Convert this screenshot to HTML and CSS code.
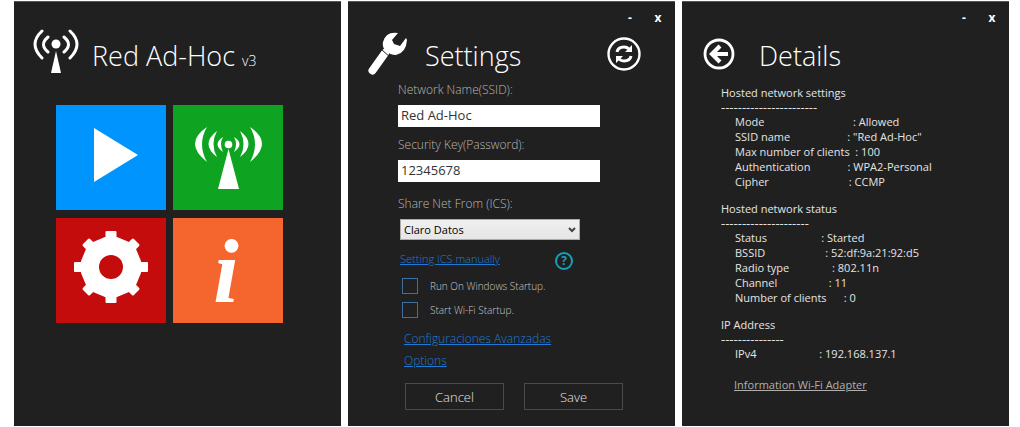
FILE: index.html
```html
<!DOCTYPE html>
<html lang="en">
<head>
  <meta charset="UTF-8">
  <meta name="viewport" content="width=device-width, initial-scale=1.0">
  <title>Red Ad-Hoc v3</title>
  <link rel="stylesheet" href="styles.css">
</head>
<body>
  <main class="windows">

    <!-- Main menu -->
    <section class="window">
      <div class="titlebar"></div>
      <header class="header header-main">
        <svg class="logo" width="46" height="50" viewBox="0 0 46 50" fill="none" stroke="#fff" stroke-width="3" stroke-linecap="round">
          <path d="M9 2Q-5 15 9 29M15 8Q6 15.500 15 23M31 8Q40 15.500 31 23M37 2Q51 15 37 29"/>
          <circle cx="23" cy="15" r="4.500" fill="#fff" stroke="none"/>
          <path d="M23 22L28 44H18Z" fill="#fff" stroke="none"/>
        </svg>
        <h1>Red Ad-Hoc <small>v3</small></h1>
      </header>
      <nav class="tiles">
        <button class="tile tile-blue" aria-label="Start">
          <svg width="110" height="105" viewBox="0 0 110 105" fill="#fff"><path d="M38 23L82 50L38 77Z"/></svg>
        </button>
        <button class="tile tile-green" aria-label="Network">
          <svg width="110" height="105" viewBox="0 0 110 105" fill="#fff">
            <path d="M34 22Q10 38 34 57Q24 39 34 22ZM44 26Q27 39 44 52Q37 39 44 26ZM50 32Q39 39 50 47Q46 39 50 32Z"/>
            <path d="M77 22Q101 38 77 57Q87 39 77 22ZM67 26Q84 39 67 52Q74 39 67 26ZM61 32Q72 39 61 47Q65 39 61 32Z"/>
            <circle cx="55.500" cy="39.500" r="3.800"/>
            <path d="M55.500 44L66 84H45Z"/>
          </svg>
        </button>
        <button class="tile tile-red" aria-label="Settings">
          <svg width="110" height="105" viewBox="0 0 110 105" fill="#fff">
            <g transform="translate(55 49)">
              <rect x="-5.500" y="-36" width="11" height="72" rx="1"/>
              <rect x="-37" y="-5" width="74" height="10" rx="1"/>
              <g transform="rotate(45)">
                <rect x="-5" y="-36" width="10" height="72" rx="1.500"/>
                <rect x="-36" y="-5" width="72" height="10" rx="1.500"/>
              </g>
              <path d="M-6 -30Q0 -31 6 -30L18 -25L25 -18L30 -6V6L25 18L18 25L6 30Q0 31 -6 30L-18 25L-25 18L-30 6V-6L-25 -18L-18 -25Z"/>
              <circle r="12" fill="#c40c0c"/>
            </g>
          </svg>
        </button>
        <button class="tile tile-orange" aria-label="Information"><span class="info">i</span></button>
      </nav>
    </section>

    <!-- Settings -->
    <section class="window">
      <div class="titlebar">
        <button aria-label="Minimize">-</button>
        <button aria-label="Close">x</button>
      </div>
      <header class="header header-settings">
        <svg width="40" height="44" viewBox="0 0 40 44">
          <path d="M17 21L4.500 38.500" stroke="#fff" stroke-width="8" stroke-linecap="round"/>
          <path d="M30 1Q18 -1 15 10Q14 16 18 19Q22 23 28 23Q38 21 39 8L38 6L32 14L26 12L24 8Z" fill="#fff"/>
          <path d="M14 18L22 25" stroke="#202020" stroke-width="1"/>
        </svg>
        <h2>Settings</h2>
        <button class="refresh" aria-label="Refresh">
          <svg width="34" height="34" viewBox="0 0 34 34" fill="none" stroke="#fff">
            <circle cx="17" cy="17" r="15.500" stroke-width="2.400"/>
            <path d="M10 15Q11 10 17 10Q20 10 22 12M24 19Q23 24 17 24Q14 24 12 22" stroke-width="3"/>
            <path d="M25 8V15H18ZM9 26V19H16Z" fill="#fff" stroke="none"/>
          </svg>
        </button>
      </header>
      <form class="form">
        <label class="label" for="ssid">Network Name(SSID):</label>
        <input class="textbox" type="text" id="ssid" value="Red Ad-Hoc">
        <label class="label" for="key">Security Key(Password):</label>
        <input class="textbox" type="text" id="key" value="12345678">
        <label class="label label-share" for="share">Share Net From (ICS):</label>
        <div class="select-wrap">
          <select id="share">
            <option>Claro Datos</option>
          </select>
          <svg width="8" height="6" viewBox="0 0 8 6" fill="none" stroke="#444" stroke-width="2"><path d="M1 1L4 4L7 1"/></svg>
        </div>
        <div class="manual">
          <a href="#">Setting ICS manually</a>
          <button type="button" class="help" aria-label="Help">?</button>
        </div>
        <div class="check">
          <input type="checkbox" id="runStartup">
          <label for="runStartup">Run On Windows Startup.</label>
        </div>
        <div class="check">
          <input type="checkbox" id="wifiStartup">
          <label for="wifiStartup">Start Wi-Fi Startup.</label>
        </div>
        <div class="links">
          <a href="#">Configuraciones Avanzadas</a>
          <a href="#">Options</a>
        </div>
        <div class="actions">
          <button type="button">Cancel</button>
          <button type="submit">Save</button>
        </div>
      </form>
    </section>

    <!-- Details -->
    <section class="window">
      <div class="titlebar">
        <button aria-label="Minimize">-</button>
        <button aria-label="Close">x</button>
      </div>
      <header class="header header-details">
        <button class="back" aria-label="Back">
          <svg width="32" height="32" viewBox="0 0 32 32" fill="none" stroke="#fff">
            <circle cx="16" cy="16" r="14" stroke-width="2.800"/>
            <path d="M25 16H10M17 8L9 16L17 24" stroke-width="4.200"/>
          </svg>
        </button>
        <h2>Details</h2>
      </header>
      <div class="details">
        <h3>Hosted network settings</h3>
        <p class="rule">-----------------------</p>
        <pre>Mode                               : Allowed
SSID name                    : "Red Ad-Hoc"
Max number of clients  : 100
Authentication             : WPA2-Personal
Cipher                            : CCMP</pre>
        <h3>Hosted network status</h3>
        <p class="rule">---------------------</p>
        <pre>Status                   : Started
BSSID                     : 52:df:9a:21:92:d5
Radio type               : 802.11n
Channel                  : 11
Number of clients      : 0</pre>
        <h3>IP Address</h3>
        <p class="rule">---------------</p>
        <pre>IPv4                      : 192.168.137.1</pre>
        <a href="#">Information Wi-Fi Adapter</a>
      </div>
    </section>

  </main>
</body>
</html>
```
FILE: styles.css
```css
* {
  box-sizing: border-box;
}

body {
  margin: 0;
  background: #fff;
  color: #fff;
  font-family: "Open Sans", "Noto Sans", sans-serif;
  font-size: 11px;
}

button {
  padding: 0;
  border: none;
  background: none;
  color: #fff;
  font-family: inherit;
  cursor: pointer;
}

svg {
  display: block;
}

.windows {
  display: flex;
  gap: 7px;
  min-height: 100vh;
  padding: 1px 11px 1px 14px;
}

.window {
  flex: 1;
  min-width: 0;
  background: #202020;
  border-top: 1px solid #555;
}

.titlebar {
  display: flex;
  justify-content: flex-end;
  height: 27px;
  padding: 6px 3px 0 0;
}

.titlebar button {
  width: 28px;
  height: 20px;
  font-size: 12px;
  font-weight: bold;
  line-height: 20px;
}

/* Headers */
.header {
  display: flex;
  align-items: center;
  height: 50px;
}

h1,
h2 {
  margin: 0;
  padding-top: 4px;
  font-size: 27px;
  font-weight: 300;
  line-height: 50px;
}

h1 {
  padding-top: 8px;
}

h1 small {
  font-size: 14px;
}

.header-main {
  padding-left: 19px;
  gap: 13px;
}

.header-settings {
  padding: 0 34px 0 20px;
  gap: 17px;
}

.header-details {
  padding-left: 21px;
  gap: 24px;
}

.refresh {
  margin-left: auto;
}

/* Menu tiles */
.tiles {
  display: grid;
  grid-template-columns: 110px 110px;
  gap: 8px 7px;
  padding: 26px 0 0 42px;
}

.tile {
  height: 105px;
  overflow: hidden;
}

.tile-blue { background: #0094ff; }
.tile-green { background: #0ea421; }
.tile-red { background: #c40c0c; }
.tile-orange { background: #f4662e; }

.info {
  display: block;
  padding-right: 4px;
  font-family: "Liberation Serif", serif;
  font-size: 92px;
  font-style: italic;
  font-weight: bold;
  line-height: 98px;
}

/* Settings form */
.form {
  display: flex;
  flex-direction: column;
  align-items: flex-start;
  padding-left: 50px;
}

.label {
  margin: 1px 0 5px;
  color: #b8b8b8;
  font-size: 12px;
  font-weight: 300;
  line-height: 20px;
}

.textbox {
  width: 202px;
  height: 22px;
  margin-bottom: 7px;
  padding: 0 4px 2px 3px;
  border: none;
  background: #fff;
  color: #333;
  font-family: inherit;
  font-size: 13px;
}

.label-share {
  margin-top: 5px;
}

.select-wrap {
  position: relative;
  margin-left: 2px;
}

.select-wrap svg {
  position: absolute;
  right: 4px;
  top: 8px;
  pointer-events: none;
}

select {
  display: block;
  width: 180px;
  height: 21px;
  padding: 0 3px;
  border: 1px solid #acacac;
  border-radius: 0;
  background: linear-gradient(#f0f0f0, #e5e5e5);
  color: #000;
  font-family: inherit;
  font-size: 11px;
  appearance: none;
}

.manual {
  display: flex;
  justify-content: space-between;
  width: 173px;
  margin: 10px 0 4px 2px;
}

.form a {
  color: #1f7bd6;
  font-size: 12px;
  font-weight: 300;
}

.form .manual a {
  font-size: 11px;
  line-height: 18px;
}

.help {
  width: 18px;
  height: 18px;
  margin-top: 2px;
  border: 2px solid #16a0b8;
  border-radius: 50%;
  color: #16a0b8;
  font-size: 12px;
  font-weight: bold;
  line-height: 14px;
}

.check {
  display: flex;
  align-items: center;
  gap: 12px;
  height: 24px;
  margin-left: 4px;
  color: #c8c8c8;
  font-size: 10px;
  font-weight: 300;
}

.check input {
  width: 16px;
  height: 16px;
  margin: 0;
  border: 1px solid #3d6f9e;
  appearance: none;
}

.links {
  display: flex;
  flex-direction: column;
  align-items: flex-start;
  margin: 6px 0 11px 6px;
  line-height: 22px;
}

.actions {
  display: flex;
  gap: 20px;
  margin-left: 7px;
}

.actions button {
  width: 99px;
  height: 27px;
  border: 1px solid #4a4a4a;
  color: #e4e4e4;
  font-size: 13px;
  font-weight: 300;
}

/* Details text */
.details {
  padding: 7px 0 0 39px;
}

.details h3,
.details .rule {
  margin: 0;
  font-size: 11px;
  font-weight: normal;
  line-height: 14px;
  color: #e4e4e4;
}

.details .rule {
  font-size: 13px;
}

.details pre {
  margin: 0 0 13px 14px;
  color: #e4e4e4;
  font-family: inherit;
  line-height: 15px;
}

.details a {
  display: inline-block;
  margin-left: 13px;
  color: #b0b0b0;
  line-height: 22px;
}
```
